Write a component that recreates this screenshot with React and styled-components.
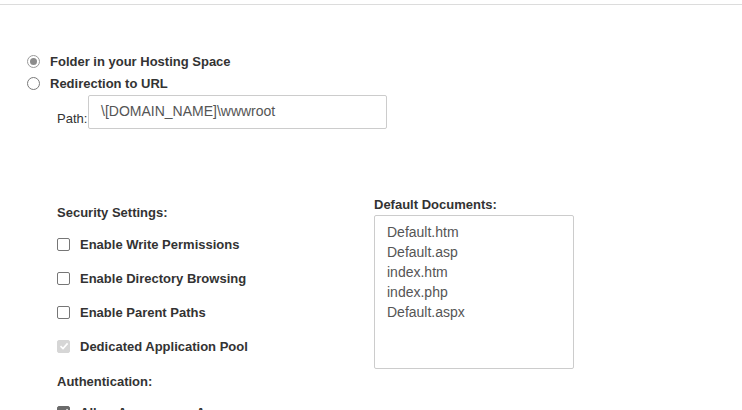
import React from "react";
import styled, { createGlobalStyle } from "styled-components";

const GlobalStyle = createGlobalStyle`
  html, body {
    margin: 0;
    padding: 0;
    background: #ffffff;
    height: 410px;
    overflow: hidden;
  }
  body {
    font-family: "Liberation Sans", Arial, sans-serif;
    color: #333333;
  }
  * { box-sizing: border-box; }
`;

const Page = styled.div`
  padding-top: 4px;
`;

const Rule = styled.div`
  border-top: 1px solid #dcdcdc;
`;

const RadioGroup = styled.div`
  margin-top: 45px;
  padding-left: 27px;
  display: flex;
  flex-direction: column;
`;

const RadioRow = styled.label`
  display: flex;
  align-items: center;
  height: 22px;
  font-size: 13px;
  font-weight: bold;
  line-height: 15px;
`;

const RadioDot = styled.span`
  width: 13px;
  height: 13px;
  border-radius: 50%;
  border: 1px solid ${(p) => (p.$checked ? "#9a9a9a" : "#7a7a7a")};
  margin-right: 10px;
  display: flex;
  align-items: center;
  justify-content: center;
  flex-shrink: 0;
  &::after {
    content: "";
    width: 7px;
    height: 7px;
    border-radius: 50%;
    background: ${(p) => (p.$checked ? "#8c8c8c" : "transparent")};
  }
`;

const PathRow = styled.div`
  display: flex;
  align-items: flex-end;
  padding-left: 57px;
  margin-top: 1px;
`;

const PathLabel = styled.span`
  font-size: 13px;
  line-height: 15px;
  padding-bottom: 3px;
  width: 31px;
`;

const PathInput = styled.div`
  width: 299px;
  height: 34px;
  border: 1px solid #cccccc;
  border-radius: 2px;
  padding: 7px 12px 0;
  font-size: 14px;
  line-height: 16px;
  color: #555555;
`;

const Columns = styled.div`
  margin-top: 68px;
  padding-left: 57px;
  display: grid;
  grid-template-columns: 317px 200px;
`;

const LeftCol = styled.div`
  display: flex;
  flex-direction: column;
`;

const Heading = styled.div`
  font-size: 13px;
  font-weight: bold;
  line-height: 15px;
  margin-top: ${(p) => p.$mt || 0}px;
  margin-bottom: ${(p) => p.$mb || 0}px;
`;

const CheckRow = styled.label`
  display: flex;
  align-items: center;
  height: 34px;
  margin-top: ${(p) => p.$mt || 0}px;
  font-size: 13px;
  font-weight: bold;
  line-height: 15px;
`;

const CheckBox = styled.span`
  width: 13px;
  height: 13px;
  border-radius: 2px;
  margin-right: 10px;
  flex-shrink: 0;
  display: flex;
  align-items: center;
  justify-content: center;
  border: 1px solid
    ${(p) => (p.$variant === "disabled" ? "#d6d6d6" : p.$variant === "checked" ? "#6b6b6b" : "#767676")};
  background: ${(p) => (p.$variant === "disabled" ? "#d6d6d6" : p.$variant === "checked" ? "#6b6b6b" : "#ffffff")};
`;

const RightCol = styled.div`
  display: flex;
  flex-direction: column;
`;

const ListBox = styled.div`
  margin-top: 3px;
  width: 200px;
  height: 154px;
  border: 1px solid #cccccc;
  border-radius: 2px;
  padding: 6px 12px;
  font-size: 14px;
  line-height: 20px;
  color: #555555;
`;

const Check = () => (
  <svg width="10" height="10" viewBox="0 0 10 10">
    <path d="M1.5 5.2 L4 7.6 L8.6 2.4" fill="none" stroke="#ffffff" strokeWidth="1.6" />
  </svg>
);

const checks = [
  { label: "Enable Write Permissions", variant: "off" },
  { label: "Enable Directory Browsing", variant: "off" },
  { label: "Enable Parent Paths", variant: "off" },
  { label: "Dedicated Application Pool", variant: "disabled" },
];

const docs = ["Default.htm", "Default.asp", "index.htm", "index.php", "Default.aspx"];

export default function App() {
  return (
    <>
      <GlobalStyle />
      <Page>
        <Rule />
        <RadioGroup>
          <RadioRow>
            <RadioDot $checked />
            Folder in your Hosting Space
          </RadioRow>
          <RadioRow>
            <RadioDot />
            Redirection to URL
          </RadioRow>
        </RadioGroup>
        <PathRow>
          <PathLabel>Path:</PathLabel>
          <PathInput>\[DOMAIN_NAME]\wwwroot</PathInput>
        </PathRow>
        <Columns>
          <LeftCol>
            <Heading $mt={8} $mb={7}>Security Settings:</Heading>
            {checks.map((c) => (
              <CheckRow key={c.label}>
                <CheckBox $variant={c.variant}>{c.variant !== "off" && <Check />}</CheckBox>
                {c.label}
              </CheckRow>
            ))}
            <Heading $mt={11}>Authentication:</Heading>
            <CheckRow $mt={6}>
              <CheckBox $variant="checked">
                <Check />
              </CheckBox>
              Allow Anonymous Access
            </CheckRow>
          </LeftCol>
          <RightCol>
            <Heading>Default Documents:</Heading>
            <ListBox>
              {docs.map((d) => (
                <div key={d}>{d}</div>
              ))}
            </ListBox>
          </RightCol>
        </Columns>
      </Page>
    </>
  );
}
